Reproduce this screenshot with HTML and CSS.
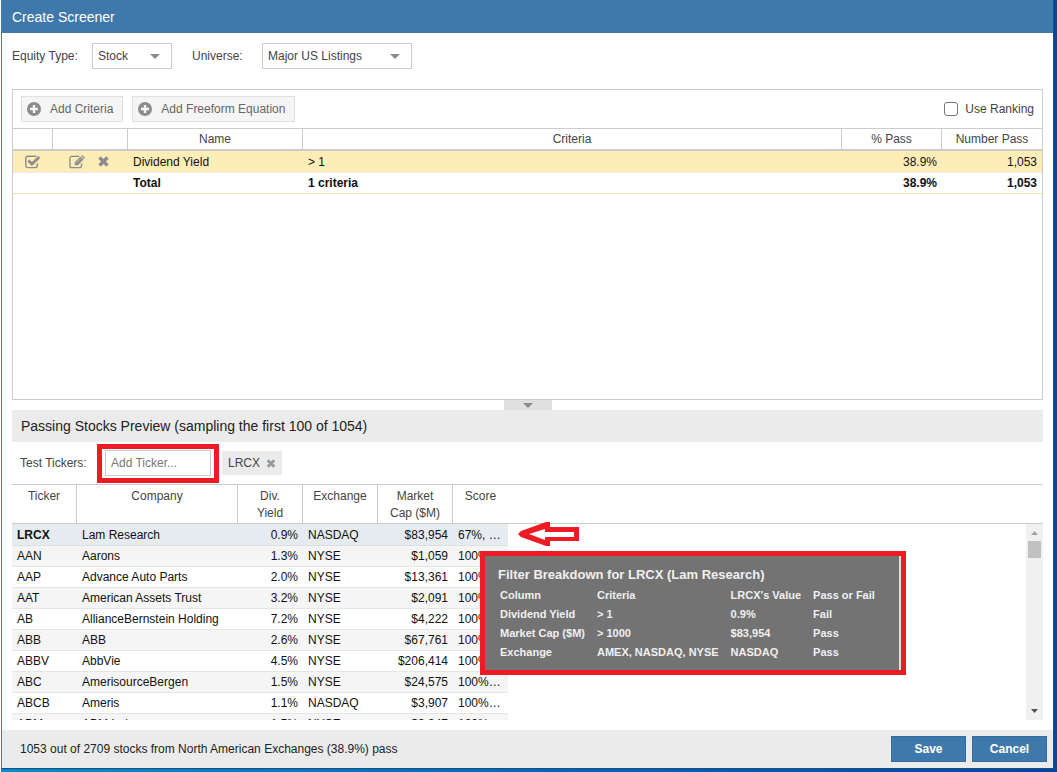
FILE: index.html
```html
<!DOCTYPE html>
<html lang="en">
<head>
<meta charset="UTF-8">
<meta name="viewport" content="width=device-width, initial-scale=1.0">
<title>Create Screener</title>
<link rel="stylesheet" href="styles.css">
</head>
<body>
<div class="dialog">
    <header class="title-bar">
        <h1>Create Screener</h1>
    </header>

    <main>
        <form class="filters">
            <label for="equityType">Equity Type:</label>
            <select id="equityType" class="select-type">
                <option>Stock</option>
                <option>ETF</option>
            </select>
            <label for="universe" class="universe-label">Universe:</label>
            <select id="universe" class="select-universe">
                <option>Major US Listings</option>
            </select>
        </form>

        <section class="criteria">
            <div class="toolbar">
                <button type="button" class="btn-add">
                    <svg width="14" height="14" viewBox="0 0 14 14"><circle cx="7" cy="7" r="7" fill="#8c8c8c"/><path d="M7 3v8M3 7h8" stroke="#f5f5f5" stroke-width="2.4"/></svg>
                    Add Criteria
                </button>
                <button type="button" class="btn-add">
                    <svg width="14" height="14" viewBox="0 0 14 14"><circle cx="7" cy="7" r="7" fill="#8c8c8c"/><path d="M7 3v8M3 7h8" stroke="#f5f5f5" stroke-width="2.4"/></svg>
                    Add Freeform Equation
                </button>
                <label class="ranking" for="useRanking"><input type="checkbox" id="useRanking">Use Ranking</label>
            </div>
            <table class="criteria-table">
                <colgroup>
                    <col class="c-check"><col class="c-tools"><col class="c-name"><col><col class="c-pass"><col class="c-pass">
                </colgroup>
                <thead>
                    <tr>
                        <th></th>
                        <th></th>
                        <th>Name</th>
                        <th>Criteria</th>
                        <th>% Pass</th>
                        <th>Number Pass</th>
                    </tr>
                </thead>
                <tbody>
                    <tr class="selected">
                        <td>
                            <button type="button" class="icon-btn check-btn" aria-label="Enabled">
                                <svg width="16" height="14" viewBox="0 0 16 14" fill="none" stroke="#8c8c8c"><path d="M12.4 8.2v2.4a2 2 0 0 1-2 2H2.8a2 2 0 0 1-2-2V3.2a2 2 0 0 1 2-2h7.6c.5 0 1 .1 1.3.4" stroke-width="1.4"/><path d="M3.4 5.6l3.5 3.5 7.4-7" stroke-width="2.8"/></svg>
                            </button>
                        </td>
                        <td>
                            <div class="row-tools">
                                <button type="button" class="icon-btn" aria-label="Edit">
                                    <svg width="17" height="14" viewBox="0 0 17 14"><path d="M12.5 8.5v2.2a1.9 1.9 0 0 1-1.9 1.9H2.8a1.9 1.9 0 0 1-1.9-1.9V3.2a1.9 1.9 0 0 1 1.9-1.9h7.6" fill="none" stroke="#8c8c8c" stroke-width="1.3"/><path d="M5.8 7.2L11.5 1.5l3 3L8.8 10.2h-3zM12.2.9l.9-.9 3 3-.9.9z" fill="#8c8c8c"/><path d="M7.6 7.8l4-4" stroke="#ffedb8" stroke-width=".6"/></svg>
                                </button>
                                <button type="button" class="icon-btn" aria-label="Delete">
                                    <svg width="11" height="11" viewBox="0 0 11 11"><path d="M1.5 1.5l8 8M9.5 1.5l-8 8" stroke="#8c8c8c" stroke-width="3.4"/></svg>
                                </button>
                            </div>
                        </td>
                        <td>Dividend Yield</td>
                        <td>&gt; 1</td>
                        <td class="num">38.9%</td>
                        <td class="num">1,053</td>
                    </tr>
                    <tr class="total">
                        <td></td>
                        <td></td>
                        <td>Total</td>
                        <td>1 criteria</td>
                        <td class="num">38.9%</td>
                        <td class="num">1,053</td>
                    </tr>
                </tbody>
            </table>
        </section>

        <button type="button" class="collapse" aria-label="Collapse">
            <svg width="10" height="5" viewBox="0 0 10 5"><path d="M0 0h10L5 5z" fill="#8c8c8c"/></svg>
        </button>

        <section class="preview">
            <h2>Passing Stocks Preview (sampling the first 100 of 1054)</h2>
            <div class="test-row">
                <label for="addTicker">Test Tickers:</label>
                <div class="highlight">
                    <input type="text" id="addTicker" placeholder="Add Ticker...">
                </div>
                <button type="button" class="chip">
                    LRCX
                    <svg width="10" height="9" viewBox="0 0 10 9"><path d="M1.7 1.2l6.6 6.6M8.3 1.2L1.7 7.8" stroke="#999" stroke-width="2.8"/></svg>
                </button>
            </div>
            <div class="stock-head">
                <table class="stock-table">
                    <colgroup>
                        <col class="s-ticker"><col class="s-company"><col class="s-yield"><col class="s-wide"><col class="s-wide"><col class="s-score">
                    </colgroup>
                    <thead>
                        <tr>
                            <th>Ticker</th>
                            <th>Company</th>
                            <th>Div.<br>Yield</th>
                            <th>Exchange</th>
                            <th>Market<br>Cap ($M)</th>
                            <th>Score</th>
                        </tr>
                    </thead>
                </table>
            </div>
            <div class="stock-list">
                <table class="stock-table">
                    <colgroup>
                        <col class="s-ticker"><col class="s-company"><col class="s-yield"><col class="s-wide"><col class="s-wide"><col class="s-score">
                    </colgroup>
                    <tbody>
                        <tr class="active"><td>LRCX</td><td>Lam Research</td><td class="num">0.9%</td><td>NASDAQ</td><td class="num">$83,954</td><td>67%, …</td></tr>
                        <tr><td>AAN</td><td>Aarons</td><td class="num">1.3%</td><td>NYSE</td><td class="num">$1,059</td><td>100%…</td></tr>
                        <tr><td>AAP</td><td>Advance Auto Parts</td><td class="num">2.0%</td><td>NYSE</td><td class="num">$13,361</td><td>100%…</td></tr>
                        <tr><td>AAT</td><td>American Assets Trust</td><td class="num">3.2%</td><td>NYSE</td><td class="num">$2,091</td><td>100%…</td></tr>
                        <tr><td>AB</td><td>AllianceBernstein Holding</td><td class="num">7.2%</td><td>NYSE</td><td class="num">$4,222</td><td>100%…</td></tr>
                        <tr><td>ABB</td><td>ABB</td><td class="num">2.6%</td><td>NYSE</td><td class="num">$67,761</td><td>100%…</td></tr>
                        <tr><td>ABBV</td><td>AbbVie</td><td class="num">4.5%</td><td>NYSE</td><td class="num">$206,414</td><td>100%…</td></tr>
                        <tr><td>ABC</td><td>AmerisourceBergen</td><td class="num">1.5%</td><td>NYSE</td><td class="num">$24,575</td><td>100%…</td></tr>
                        <tr><td>ABCB</td><td>Ameris</td><td class="num">1.1%</td><td>NASDAQ</td><td class="num">$3,907</td><td>100%…</td></tr>
                        <tr><td>ABM</td><td>ABM Indus.</td><td class="num">1.5%</td><td>NYSE</td><td class="num">$3,347</td><td>100%…</td></tr>
                    </tbody>
                </table>
                <div class="scrollbar">
                    <svg width="7" height="4" viewBox="0 0 7 4"><path d="M0 4l3.5-4L7 4z" fill="#a0a0a0"/></svg>
                    <div class="thumb"></div>
                    <svg class="down" width="7" height="4" viewBox="0 0 7 4"><path d="M0 0l3.5 4L7 0z" fill="#505050"/></svg>
                </div>
            </div>

            <svg class="arrow" width="62" height="24" viewBox="0 0 62 24"><path d="M1 12L4 9 29 0h4v5h29v14H33v5h-4L4 15z" fill="#ed1c24"/><path d="M12 12l16-5v3h29v5H28v3z" fill="#fff"/></svg>

            <div class="tooltip">
                <div class="tooltip-body">
                    <h3>Filter Breakdown for LRCX (Lam Research)</h3>
                    <table>
                        <tr><th>Column</th><th>Criteria</th><th>LRCX's Value</th><th>Pass or Fail</th></tr>
                        <tr><td>Dividend Yield</td><td>&gt; 1</td><td>0.9%</td><td>Fail</td></tr>
                        <tr><td>Market Cap ($M)</td><td>&gt; 1000</td><td>$83,954</td><td>Pass</td></tr>
                        <tr><td>Exchange</td><td>AMEX, NASDAQ, NYSE</td><td>NASDAQ</td><td>Pass</td></tr>
                    </table>
                </div>
            </div>
        </section>
    </main>

    <footer>
        <p>1053 out of 2709 stocks from North American Exchanges (38.9%) pass</p>
        <button type="button" class="btn-main">Save</button>
        <button type="button" class="btn-main">Cancel</button>
    </footer>
</div>
</body>
</html>
```
FILE: styles.css
```css
* {
    box-sizing: border-box;
}

body {
    margin: 0;
    min-height: 100vh;
    display: flex;
    padding: 0 4px 4px 1px;
    background: linear-gradient(to right, #fff 1px, #008cc8 1px, #0046a5 98%);
    font-family: "Liberation Sans", Arial, sans-serif;
    font-size: 12px;
    color: #444;
}

button, input, select {
    font-family: inherit;
    font-size: 12px;
    color: #444;
    margin: 0;
}

button {
    cursor: pointer;
}

svg {
    display: block;
}

.dialog {
    flex: 1;
    min-width: 0;
    display: flex;
    flex-direction: column;
    background-color: #fff;
    border-left: 1px solid #3f79ac;
    box-shadow: 0 0 0 1px #1f4c7a;
    clip-path: inset(0 -1px -1px 0);
}

.title-bar {
    height: 33px;
    padding: 0 10px;
    background-color: #3f79ac;
}

.title-bar h1 {
    margin: 0;
    font-size: 14px;
    line-height: 34px;
    font-weight: normal;
    color: #fff;
}

main {
    flex: 1;
    display: flex;
    flex-direction: column;
    padding: 10px 10px;
}

.filters {
    display: flex;
    align-items: center;
    margin-bottom: 20px;
}

.filters label {
    width: 80px;
}

.filters .universe-label {
    width: 70px;
    margin-left: 20px;
}

select {
    height: 26px;
    padding: 0 5px;
    border: 1px solid #ccc;
    border-radius: 0;
    appearance: none;
    background: #fff url("data:image/svg+xml,%3Csvg xmlns='http://www.w3.org/2000/svg' width='10' height='5'%3E%3Cpath d='M0 0h10L5 5z' fill='%238c8c8c'/%3E%3C/svg%3E") no-repeat right 11px center;
}

.select-type {
    width: 80px;
}

.select-universe {
    width: 150px;
}

/* criteria panel */
.criteria {
    flex: 1;
    border: 1px solid #ccc;
}

.toolbar {
    display: flex;
    align-items: center;
    gap: 9px;
    height: 38px;
    padding: 0 8px;
}

.btn-add {
    display: flex;
    align-items: center;
    gap: 9px;
    height: 26px;
    padding: 0 9px 0 5px;
    background-color: #f5f5f5;
    border: 1px solid #e0e0e0;
    color: #666;
}

.ranking {
    display: flex;
    align-items: center;
    gap: 7px;
    margin-left: auto;
}

.ranking input {
    width: 14px;
    height: 14px;
    margin: 0;
    appearance: none;
    border: 1px solid #767676;
    border-radius: 3px;
}

table {
    border-collapse: separate;
    border-spacing: 0;
}

th, td {
    font-weight: normal;
    text-align: left;
    padding: 0 5px;
    white-space: nowrap;
}

.num {
    text-align: right;
}

.criteria-table {
    width: 100%;
    table-layout: fixed;
}

.c-check { width: 40px; }
.c-tools { width: 75px; }
.c-name { width: 175px; }
.c-pass { width: 100px; }

.criteria-table th {
    height: 23px;
    text-align: center;
    border-top: 1px solid #ccc;
    border-right: 1px solid #ccc;
    border-bottom: 2px solid #ccc;
}

.criteria-table th:last-child {
    border-right: none;
}

.criteria-table td {
    height: 21px;
    color: #111;
    border-bottom: 1px solid #ebebeb;
}

.criteria-table .selected td {
    height: 22px;
    background-color: #ffedb8;
}

.criteria-table .total td {
    font-weight: bold;
    border-bottom-color: #f0e2ac;
}

.icon-btn {
    display: block;
    padding: 0;
    border: none;
    background: none;
}

.check-btn {
    margin-left: 7px;
}

.row-tools {
    display: flex;
    align-items: center;
    gap: 12px;
    padding-left: 11px;
}

.collapse {
    display: flex;
    justify-content: center;
    align-items: center;
    align-self: center;
    width: 48px;
    height: 10px;
    padding: 0;
    border: none;
    background-color: #e0e0e0;
}

/* preview of passing stocks */
.preview {
    position: relative;
}

.preview h2 {
    margin: 0;
    padding-left: 9px;
    font-size: 14px;
    line-height: 32px;
    font-weight: normal;
    color: #222;
    background-color: #ebebeb;
}

.test-row {
    display: flex;
    align-items: center;
    height: 42px;
    padding-left: 8px;
}

.test-row label {
    width: 77px;
}

.highlight {
    border: 5px solid #ed1c24;
    padding: 1px 3px 2px;
    margin-right: 3px;
}

.highlight input {
    display: block;
    width: 106px;
    height: 26px;
    padding: 0 5px;
    border: 1px solid #ccc;
}

.highlight input::placeholder {
    color: #777;
}

.chip {
    display: flex;
    align-items: center;
    gap: 6px;
    height: 24px;
    padding: 0 6px;
    border: none;
    background-color: #ebebeb;
}

.stock-head {
    border-top: 1px solid #ccc;
    border-bottom: 1px solid #ccc;
}

.stock-table {
    width: 496px;
    table-layout: fixed;
}

.s-ticker { width: 65px; }
.s-company { width: 161px; }
.s-yield { width: 65px; }
.s-wide { width: 75px; }
.s-score { width: 55px; }

.stock-table th {
    height: 38px;
    padding-top: 3px;
    line-height: 17px;
    text-align: center;
    vertical-align: top;
    border-right: 1px solid #ccc;
}

.stock-table th:last-child {
    border-right: none;
}

.stock-table td {
    height: 21px;
    color: #111;
    border-bottom: 1px solid #e5e5e5;
}

.stock-table tr:nth-child(even) {
    background-color: #f5f5f5;
}

.stock-table .active {
    background-color: #e6ebef;
}

.stock-table .active td {
    height: 22px;
    border-bottom-color: #dae0e4;
}

.stock-table .active td:first-child {
    font-weight: bold;
}

.stock-list {
    display: flex;
    justify-content: space-between;
    align-items: flex-start;
    height: 196px;
    overflow: hidden;
}

.scrollbar {
    display: flex;
    flex-direction: column;
    align-items: center;
    width: 17px;
    height: 100%;
    padding: 7px 0;
    background-color: #f0f0f0;
}

.thumb {
    width: 13px;
    height: 17px;
    margin-top: 6px;
    background-color: #c1c1c1;
}

.down {
    margin-top: auto;
}

.arrow {
    position: absolute;
    left: 505px;
    top: 112px;
}

.tooltip {
    position: absolute;
    left: 468px;
    top: 141px;
    width: 426px;
    border: 5px solid #ed1c24;
    padding-right: 2px;
    background-color: #ddd;
}

.tooltip-body {
    padding: 9px 13px;
    background-color: #737373;
    color: #f0f0f0;
}

.tooltip h3 {
    margin: 0;
    font-size: 13px;
    line-height: 20px;
}

.tooltip th, .tooltip td {
    height: 19px;
    padding: 0 10px 0 2px;
    font-size: 11px;
    font-weight: bold;
}

footer {
    display: flex;
    align-items: center;
    gap: 6px;
    height: 38px;
    padding: 0 6px 0 18px;
    background-color: #ebebeb;
}

footer p {
    margin: 0 auto 0 0;
    color: #222;
}

.btn-main {
    width: 75px;
    height: 26px;
    border: 1px solid #386d9b;
    background-color: #3f79ac;
    color: #fff;
    font-weight: bold;
}
```
